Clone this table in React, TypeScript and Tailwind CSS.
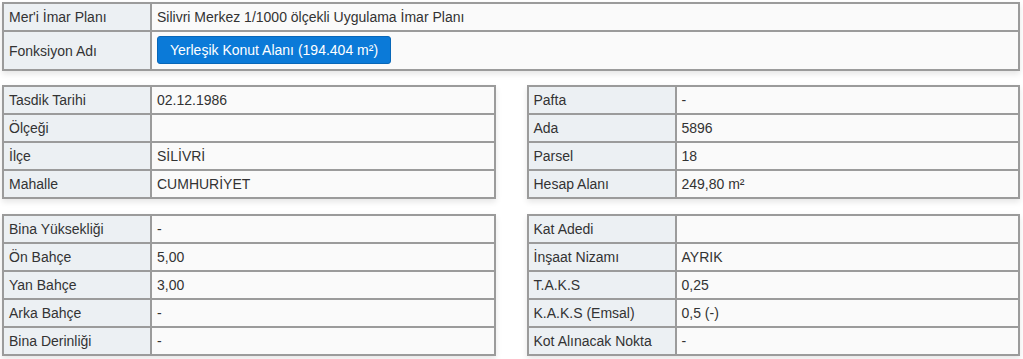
import React from 'react';

type Row = [string, string];

const leftA: Row[] = [
  ['Tasdik Tarihi', '02.12.1986'],
  ['Ölçeği', ''],
  ['İlçe', 'SİLİVRİ'],
  ['Mahalle', 'CUMHURİYET'],
];

const rightA: Row[] = [
  ['Pafta', '-'],
  ['Ada', '5896'],
  ['Parsel', '18'],
  ['Hesap Alanı', '249,80 m²'],
];

const leftB: Row[] = [
  ['Bina Yüksekliği', '-'],
  ['Ön Bahçe', '5,00'],
  ['Yan Bahçe', '3,00'],
  ['Arka Bahçe', '-'],
  ['Bina Derinliği', '-'],
];

const rightB: Row[] = [
  ['Kat Adedi', ''],
  ['İnşaat Nizamı', 'AYRIK'],
  ['T.A.K.S', '0,25'],
  ['K.A.K.S (Emsal)', '0,5 (-)'],
  ['Kot Alınacak Nokta', '-'],
];

const labelCls =
  'w-[148px] border-2 border-[#9b9b9b] bg-[#ecf0f3] px-[5px] py-[4px] text-left align-middle font-normal';
const valueCls = 'border-2 border-[#9b9b9b] bg-[#fafafa] px-[5px] py-[4px] align-middle';

const InfoTable: React.FC<{ rows: Row[] }> = ({ rows }) => (
  <div className="flex-1 shadow-[0_3px_6px_rgba(0,0,0,0.1)]">
    <table className="w-full border-collapse">
      <tbody>
        {rows.map(([label, value]) => (
          <tr key={label}>
            <td className={labelCls}>{label}</td>
            <td className={valueCls}>{value}</td>
          </tr>
        ))}
      </tbody>
    </table>
  </div>
);

export default function App() {
  return (
    <div
      className="bg-white w-[1023px] h-[359px] overflow-hidden pl-[2px] pr-[3px] pt-[2px] text-[14px] leading-[18px] text-[#333]"
      style={{ fontFamily: '"Liberation Sans", Arial, sans-serif' }}
    >
      <div className="shadow-[0_3px_6px_rgba(0,0,0,0.1)]">
        <table className="w-full border-collapse">
          <tbody>
            <tr>
              <td className={labelCls}>Mer'i İmar Planı</td>
              <td className={valueCls}>Silivri Merkez 1/1000 ölçekli Uygulama İmar Planı</td>
            </tr>
            <tr>
              <td className={labelCls}>Fonksiyon Adı</td>
              <td className="border-2 border-[#9b9b9b] bg-[#fafafa] px-[5px] pt-[4px] pb-[5px] align-middle">
                <button className="h-[28px] rounded-[3px] border border-[#0867b8] bg-[#0b7ad8] px-[12px] text-[14px] text-white">
                  Yerleşik Konut Alanı (194.404 m²)
                </button>
              </td>
            </tr>
          </tbody>
        </table>
      </div>

      <div className="mt-[14px] flex gap-[31px]">
        <InfoTable rows={leftA} />
        <InfoTable rows={rightA} />
      </div>

      <div className="mt-[15px] flex gap-[31px]">
        <InfoTable rows={leftB} />
        <InfoTable rows={rightB} />
      </div>
    </div>
  );
}
